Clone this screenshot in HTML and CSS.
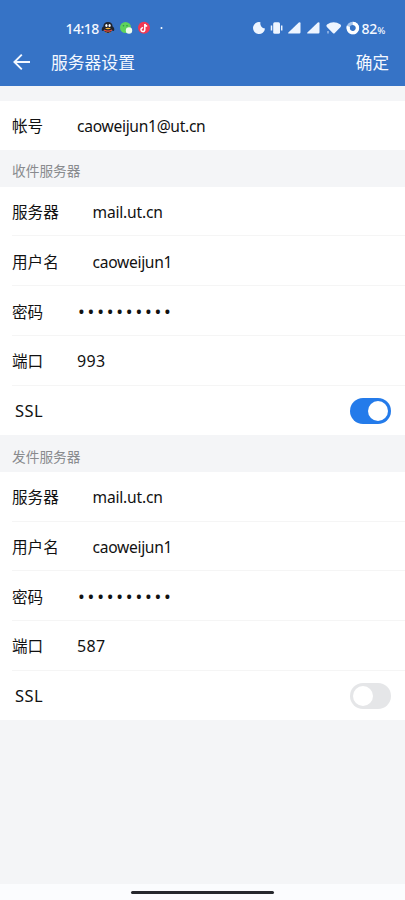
FILE: index.html
```html
<!DOCTYPE html>
<html lang="zh-CN">
<head>
<meta charset="utf-8">
<meta name="viewport" content="width=device-width, initial-scale=1">
<title>服务器设置</title>
<link rel="stylesheet" href="styles.css">
</head>
<body>
<div class="screen">
  <header class="header">
    <div class="status">
      <span class="time">14:18</span>
      <svg class="notifications" width="64" height="16" viewBox="0 0 64 16">
        <path d="M1 11Q0 8 2.400 6.500Q2.500 2 7 2T11.600 6.500Q14 8 13 11L11 10.500Q10 13 7 13T3 10.500Z" fill="#20242d"/>
        <ellipse cx="5.400" cy="5.500" rx="1.100" ry="1.500" fill="#fff"/><ellipse cx="8.600" cy="5.500" rx="1.100" ry="1.500" fill="#fff"/>
        <path d="M4 8.200Q7 7.200 10 8.200Q7 10.500 4 8.200Z" fill="#ffb52e"/>
        <path d="M3 9.400Q7 11.600 11 9.400V10.800Q7 12.500 3 10.800Z" fill="#e84b3c"/>
        <path d="M3.500 13Q5 11.800 6.700 13ZM7.300 13Q9 11.800 10.500 13Z" fill="#ffb52e"/>
        <circle cx="24.500" cy="7.500" r="5.500" fill="#5ed45c"/>
        <circle cx="22.500" cy="5.700" r=".8" fill="#329448"/><circle cx="26" cy="5.700" r=".8" fill="#329448"/>
        <ellipse cx="28" cy="10.500" rx="3.200" ry="3.200" fill="#edfced"/>
        <circle cx="43" cy="7.700" r="6" fill="#f13853"/>
        <path d="M43.800 4v5.500a1.900 1.900 0 1 1-1.700-1.700M43.800 4q.7 2 2.400 2" fill="none" stroke="#fff" stroke-width="1.500"/>
        <circle cx="60.500" cy="8" r="1" fill="#fff"/>
      </svg>
      <svg class="system" width="110" height="16" viewBox="0 0 110 16" fill="#eef5ff">
        <path d="M8.500 2.200A6 6 0 1 0 13 8.500A5 5 0 0 1 8.500 2.200Z"/>
        <rect x="21.200" y="2.300" width="6.800" height="11.400" rx="1.500"/>
        <path d="M19.500 5.500v5M29.700 5.500v5" stroke="#eef5ff" stroke-width="1.500"/>
        <path d="M48.500 3.300V12.300Q48.500 13.500 47.300 13.500H36.800Q35.300 13.500 36.400 12.400L46.800 2.600Q48.500 1.400 48.500 3.300Z"/>
        <path d="M67.500 3.300V12.300Q67.500 13.500 66.300 13.500H55.800Q54.300 13.500 55.400 12.400L65.800 2.600Q67.500 1.400 67.500 3.300Z"/>
        <path d="M75 4.500Q81.500 .2 88.500 4.500Q89.700 5.600 88.600 7.100L82.800 13Q81.800 14 80.800 13L74.900 7.100Q73.700 5.600 75 4.500Z"/>
        <path d="M76 11v2.500" stroke="#cfe1fa"/>
        <circle cx="100.800" cy="8" r="4.700" fill="none" stroke="#a6c6ef" stroke-width="3.300"/>
        <path d="M100.800 3.300A4.700 4.700 0 1 1 96.400 6.400" fill="none" stroke="#fff" stroke-width="3.300"/>
      </svg>
      <span class="battery">82<small>%</small></span>
    </div>
    <div class="navbar">
      <svg class="back" width="18" height="18" viewBox="0 0 18 18"><path d="M17 9H1.800M8.800 1.600L1.400 9L8.800 16.400" fill="none" stroke="#f4f8ff" stroke-width="1.900"/></svg>
      <h1 class="title">服务器设置</h1>
      <span class="confirm">确定</span>
    </div>
  </header>
  <main class="content">
    <section class="group account">
      <div class="row"><span class="label">帐号</span><span class="value email">caoweijun1@ut.cn</span></div>
    </section>
    <h2 class="caption">收件服务器</h2>
    <section class="group">
      <div class="row"><span class="label wide">服务器</span><span class="value host">mail.ut.cn</span></div>
      <div class="row"><span class="label wide">用户名</span><span class="value user">caoweijun1</span></div>
      <div class="row"><span class="label">密码</span><span class="value password">••••••••••</span></div>
      <div class="row"><span class="label">端口</span><span class="value port">993</span></div>
      <div class="row"><span class="ssl">SSL</span><span class="switch on"></span></div>
    </section>
    <h2 class="caption">发件服务器</h2>
    <section class="group">
      <div class="row"><span class="label wide">服务器</span><span class="value host">mail.ut.cn</span></div>
      <div class="row"><span class="label wide">用户名</span><span class="value user">caoweijun1</span></div>
      <div class="row"><span class="label">密码</span><span class="value password">••••••••••</span></div>
      <div class="row"><span class="label">端口</span><span class="value port">587</span></div>
      <div class="row"><span class="ssl">SSL</span><span class="switch"></span></div>
    </section>
  </main>
  <footer class="home"><span class="handle"></span></footer>
</div>
</body>
</html>
```
FILE: styles.css
```css
* { box-sizing: border-box; }
body {
  margin: 0;
  font-family: "Noto Sans", "Noto Sans CJK SC", sans-serif;
  color: #111;
}
.screen {
  display: flex;
  flex-direction: column;
  height: 900px;
  background: #f4f5f7;
}
.header {
  height: 85.5px;
  padding-top: 16px;
  background: #3673c6;
  color: #f4f8ff;
}
.status {
  display: flex;
  align-items: center;
  height: 24px;
  padding-left: 65.5px;
}
.time { width: 35.5px; font-size: 14px; font-weight: 500; letter-spacing: -.5px; }
.system { margin-left: 86.500px; }
.battery { font-size: 14px; font-weight: 500; letter-spacing: -.2px; white-space: nowrap; }
.battery small { font-size: 9.5px; }
.navbar {
  display: flex;
  align-items: center;
  height: 44px;
  padding: 0 16px 0 13px;
}
.title {
  margin: 0 auto 0 20px;
  font-size: 16.8px;
  font-weight: 400;
}
.confirm { font-size: 16.6px; }
.content { flex: 1; padding-top: 15.3px; }
.group { background: #fff; }
.account { height: 49.4px; }
.row {
  display: flex;
  align-items: center;
  height: 49.7px;
  margin-left: 12px;
  padding: 1px 14px 0 0;
  border-bottom: 1px solid #f5f5f5;
}
.row:last-child { border-bottom-color: transparent; }
.label { width: 65px; font-size: 15.6px; }
.label.wide { width: 80.5px; }
.value, .ssl { padding-top: 1px; font-size: 15.6px; letter-spacing: -.3px; }
.host { letter-spacing: -.2px; }
.port { font-size: 16px; letter-spacing: .3px; }
.ssl { margin-left: 3px; font-size: 16.500px; letter-spacing: .5px; }
.password { padding: 0 0 0 1px; font-size: 18px; letter-spacing: 2.8px; }
.caption {
  display: flex;
  align-items: center;
  height: 36.6px;
  margin: 0;
  padding: 4px 12px 0;
  color: #898b8e;
  font-size: 13.7px;
  font-weight: 400;
}
.switch {
  display: flex;
  align-items: center;
  width: 41.500px;
  height: 26px;
  margin: 1px 0 0 auto;
  padding: 0 3px;
  border-radius: 13px;
  background: #e5e6e8;
}
.switch::before {
  content: "";
  width: 20px;
  height: 20px;
  border-radius: 50%;
  background: #fff;
}
.switch.on { justify-content: flex-end; background: #247bea; }
.home {
  display: flex;
  justify-content: center;
  height: 16px;
  padding-top: 6.500px;
  background: #fbfcfe;
}
.handle { width: 143px; height: 3.500px; border-radius: 2px; background: #26282d; }
```
